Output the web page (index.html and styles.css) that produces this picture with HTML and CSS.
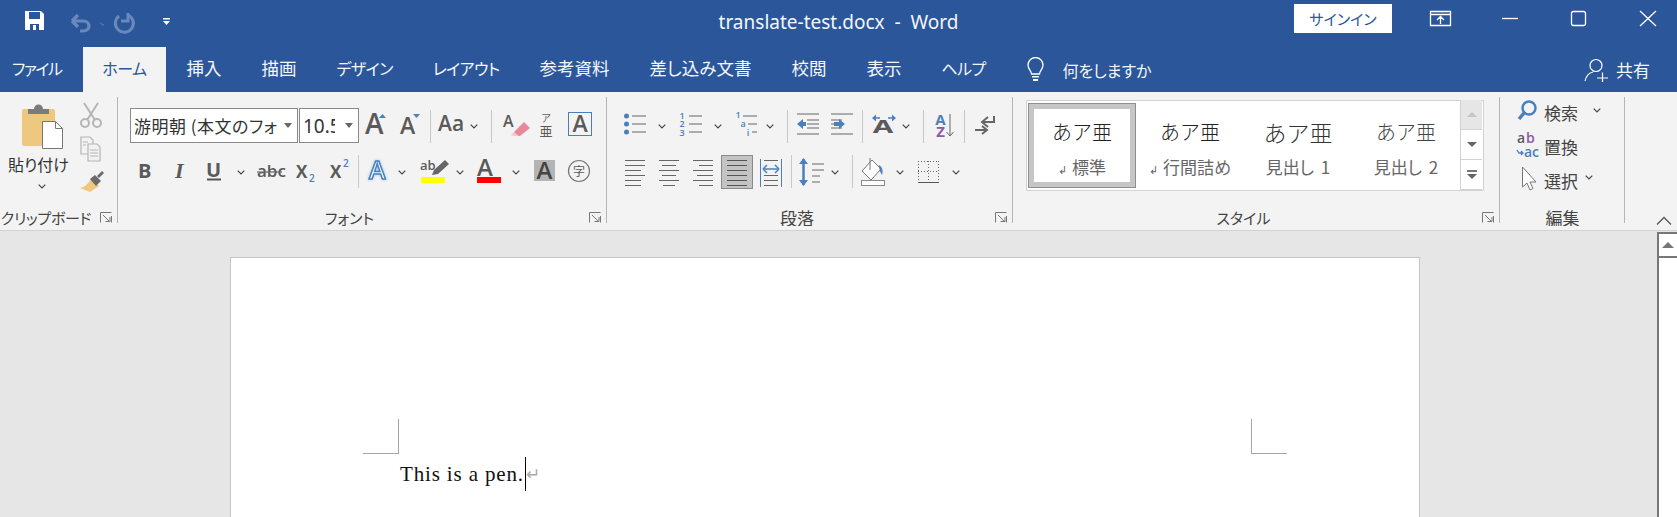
FILE: index.html
```html
<!DOCTYPE html>
<html lang="ja">

<head>
    <meta charset="UTF-8">
    <title>translate-test.docx - Word</title>
    <link rel="stylesheet" href="styles.css">
</head>

<body>
    <svg class="defs" width="0" height="0">
        <symbol id="chev" viewBox="0 0 8 5" width="8" height="5">
            <path d="M.7.7 4 4 7.3.7" fill="none" stroke="#444" stroke-width="1.2" />
        </symbol>
        <symbol id="launch" viewBox="0 0 12 11" width="12" height="11">
            <path d="M.5 10.5V.5h11M3 3l6 6M5.500 9.500H10V5M11.500 4v6.500" fill="none" stroke="#777" />
        </symbol>
    </svg>

    <header class="titlebar">
        <div class="qat">
            <svg width="60" height="47">
                <path d="M25 11h16l3 3v16H25z" fill="#fff" />
                <path d="M29 12h11v7H29z" fill="#2b579a" />
                <path d="M30 24h9v6h-9z" fill="#2b579a" />
                <path d="M33 25h3v5h-3z" fill="#fff" />
            </svg>
            <svg width="44" height="47">
                <path d="M12 21h11c8 0 8 10 0 10h-3M12 21l6-6M12 21l6 6" fill="none" stroke="#6a89bb" stroke-width="3.200" />
                <path d="M40 22.500l3 3 3-3" fill="none" stroke="#6a89bb" />
            </svg>
            <svg width="73" height="47">
                <path d="M27 15a9 9 0 1 1-9 1M27 13v8h-7" fill="none" stroke="#6a89bb" stroke-width="3" transform="translate(-3 0)" />
                <path d="M73 18h-7v1.500h7zM66 21h7l-3.500 4z" fill="#fff" transform="translate(-7 0)" />
            </svg>
        </div>
        <div class="doc-title">translate-test.docx&nbsp; -&nbsp; Word</div>
        <div class="winctrl">
            <button class="signin">サインイン</button>
            <svg width="285" height="47" class="winicons">
                <g fill="none" stroke="#fff" stroke-width="1.300">
                    <path d="M38.500 11.500h20v14h-20zM38.500 14.500h20M48.500 24v-7M45 20l3.500-3.500 3.500 3.500" />
                    <path d="M110 18.500h16" />
                    <rect x="179.500" y="11.500" width="14" height="14" rx="2" />
                    <path d="M248 11l16 15M264 11l-16 15" />
                </g>
            </svg>
        </div>
    </header>

    <nav class="tabs">
        <a class="tab file">ファイル</a>
        <a class="tab active kana">ホーム</a>
        <a class="tab">挿入</a>
        <a class="tab">描画</a>
        <a class="tab kana">デザイン</a>
        <a class="tab kana">レイアウト</a>
        <a class="tab">参考資料</a>
        <a class="tab">差し込み文書</a>
        <a class="tab">校閲</a>
        <a class="tab">表示</a>
        <a class="tab kana">ヘルプ</a>
        <div class="tell-me">
            <svg width="19" height="25">
                <path d="M5.500 17c0-3-3.500-4.500-3.500-9a7.500 7.500 0 0 1 15 0c0 4.500-3.500 6-3.500 9z" fill="none" stroke="#fff" stroke-width="1.300" />
                <path d="M6 19h7v1.500H6zM7 22h5v2H7z" fill="#fff" />
            </svg>
            <span>何をしますか</span>
        </div>
        <div class="share">
            <svg width="24" height="24">
                <circle cx="12" cy="7.500" r="6" fill="none" stroke="#fff" stroke-width="1.200" />
                <path d="M1 23c1-5 4-8 8-9M13 20h11M18.500 14.500V24" fill="none" stroke="#fff" stroke-width="1.200" />
            </svg>
            <span>共有</span>
        </div>
    </nav>

    <section class="ribbon">
        <div class="group clip">
            <div class="clip-body">
                <div class="paste">
                    <svg width="45" height="47">
                        <rect x="3" y="6" width="33" height="37" rx="2" fill="#edc87e" />
                        <path d="M9 11V6h6a4 4 0 0 1 9 0h6v5z" fill="#7b7b7b" />
                        <path d="M23.500 18.500h13l7 7v20h-20z" fill="#fff" stroke="#777" />
                        <path d="M36.500 18.500v7h7" fill="none" stroke="#777" />
                    </svg>
                    <span>貼り付け</span>
                    <svg width="8" height="5" class="paste-chev"><use href="#chev" /></svg>
                </div>
                <div class="clip-tools">
                    <svg width="24" height="26">
                        <g fill="none" stroke="#b5b5b5" stroke-width="2">
                            <path d="M5 1l11 17M19 1L8 18" />
                            <circle cx="6" cy="21" r="4" />
                            <circle cx="18" cy="21" r="4" />
                        </g>
                    </svg>
                    <svg width="24" height="26">
                        <g fill="#f2f2f2" stroke="#b5b5b5" stroke-width="1.200">
                            <path d="M2 1h9l3 3v14H2z" />
                            <path d="M9 8h9l3 3v14H9z" />
                            <path d="M11 14h8M11 17h8M11 20h8M4 6h5M4 9h3" />
                        </g>
                    </svg>
                    <svg width="26" height="24">
                        <path d="M12 9l8 7-9 6-10-4c5-1 8-4 11-9z" fill="#edc87e" />
                        <path d="M11 9l5-4 6 6-5 5z" fill="#6a6a6a" />
                        <path d="M18 6l5-5 2 2-5 5z" fill="#6a6a6a" />
                    </svg>
                </div>
            </div>
            <div class="group-label">クリップボード</div>
            <svg class="launcher"><use href="#launch" /></svg>
        </div>

        <div class="group font">
            <div class="row top">
                <div class="combo name">游明朝 (本文のフォ<b class="caret"></b></div>
                <div class="combo size"><span>10.5</span><b class="caret"></b></div>
                <svg width="37" height="35">
                    <text x="6" y="26" font-size="28" class="gl">A</text>
                    <path d="M20 10l3.500-4 3.500 4z" fill="#4a80bd" />
                </svg>
                <svg width="34" height="35">
                    <text x="4" y="26" font-size="23" class="gl">A</text>
                    <path d="M17 6h7l-3.500 4z" fill="#4a80bd" />
                </svg>
                <i class="sep"></i>
                <svg width="60" height="35">
                    <text x="7" y="23" font-size="21" class="gl">Aa</text>
                    <use href="#chev" x="39" y="16" />
                </svg>
                <i class="sep"></i>
                <svg width="44" height="35">
                    <text x="11" y="19" font-size="16" class="gl">A</text>
                    <path d="M22 24l10-10 6 6-10 8h-4z" fill="#e8889b" />
                    <path d="M19 27l3-3 5 4h-5z" fill="#f3c4ce" />
                </svg>
                <svg width="25" height="35">
                    <text x="10" y="14" font-size="10" text-anchor="middle" class="gl cjk">ア</text>
                    <text x="10" y="28" font-size="13" text-anchor="middle" class="gl cjk">亜</text>
                </svg>
                <svg width="40" height="35">
                    <rect x="7.500" y="4.500" width="23" height="23" fill="none" stroke="#4a7ebb" />
                    <text x="19" y="24" font-size="23" text-anchor="middle" class="gl">A</text>
                </svg>
            </div>
            <div class="row">
                <svg width="35" height="38"><text x="8" y="25" font-size="20" class="gl bold">B</text></svg>
                <svg width="35" height="38"><text x="10" y="25" font-size="22" class="gl slab">I</text></svg>
                <svg width="33" height="38">
                    <text x="6" y="24" font-size="20" class="gl bold">U</text>
                    <path d="M7 26.500h14" stroke="#555" stroke-width="2" />
                </svg>
                <svg width="17" height="38"><use href="#chev" x="4" y="17" /></svg>
                <svg width="36" height="38">
                    <text x="7" y="24" font-size="17" class="gl">abc</text>
                    <path d="M7 19h25" stroke="#666" stroke-width="1.200" />
                </svg>
                <svg width="36" height="38">
                    <text x="10" y="25" font-size="17" class="gl bold">X</text>
                    <text x="23" y="29" font-size="10" class="gl blue">2</text>
                </svg>
                <svg width="36" height="38">
                    <text x="8" y="25" font-size="17" class="gl bold">X</text>
                    <text x="21" y="14" font-size="10" class="gl blue">2</text>
                </svg>
                <i class="sep"></i>
                <svg width="36" height="38">
                    <text x="10" y="26" font-size="25" class="gl glow">A</text>
                </svg>
                <svg width="16" height="38"><use href="#chev" x="3" y="17" /></svg>
                <svg width="41" height="38">
                    <text x="9" y="17" font-size="13" class="gl">ab</text>
                    <path d="M21 22l2-5 11-10 4 4-11 10z" fill="#666" />
                    <rect x="10" y="24" width="24" height="6" fill="#ff0" />
                </svg>
                <svg width="16" height="38"><use href="#chev" x="4" y="17" /></svg>
                <svg width="41" height="38">
                    <text x="9" y="23" font-size="24" class="gl">A</text>
                    <rect x="9" y="24" width="24" height="6" fill="#f00" />
                </svg>
                <svg width="16" height="38"><use href="#chev" x="3" y="17" /></svg>
                <svg width="37" height="38">
                    <rect x="9" y="7" width="21" height="21" fill="#b4b4b4" />
                    <text x="19.500" y="26" font-size="24" text-anchor="middle" class="gl dark">A</text>
                </svg>
                <svg width="38" height="38">
                    <circle cx="17" cy="18" r="10.500" fill="none" stroke="#777" stroke-width="1.200" />
                    <text x="17" y="22.500" font-size="12" text-anchor="middle" class="gl cjk">字</text>
                </svg>
            </div>
            <div class="group-label">フォント</div>
            <svg class="launcher"><use href="#launch" /></svg>
        </div>

        <div class="group para">
            <div class="row top">
                <svg width="36" height="35">
                    <g fill="#4a80bd"><circle cx="8.500" cy="8" r="2.500" /><circle cx="8.500" cy="16" r="2.500" /><circle cx="8.500" cy="24" r="2.500" /></g>
                    <path d="M14 8h14M14 16h14M14 24h14" stroke="#666" />
                </svg>
                <svg width="16" height="35"><use href="#chev" x="4" y="16" /></svg>
                <svg width="36" height="35">
                    <text x="12" y="11" font-size="9" text-anchor="middle" class="gl blue">1</text>
                    <text x="12" y="19" font-size="9" text-anchor="middle" class="gl blue">2</text>
                    <text x="12" y="28" font-size="9" text-anchor="middle" class="gl blue">3</text>
                    <path d="M19 8h13M19 16h13M19 24h13" stroke="#666" />
                </svg>
                <svg width="20" height="35"><use href="#chev" x="8" y="16" /></svg>
                <svg width="36" height="35">
                    <text x="12" y="10" font-size="9" text-anchor="middle" class="gl blue">1</text>
                    <text x="17" y="19" font-size="9" text-anchor="middle" class="gl blue">a</text>
                    <text x="22" y="28" font-size="9" text-anchor="middle" class="gl blue">i</text>
                    <path d="M17 8h14M22 16h9M26 24h5" stroke="#666" />
                </svg>
                <svg width="25" height="35"><use href="#chev" x="4" y="16" /></svg>
                <i class="sep"></i>
                <svg width="37" height="35">
                    <path d="M9 6h22M19 12h12M19 16h12M19 20h12M9 26h22" stroke="#666" />
                    <path d="M9 16l6-5v3h3v4h-3v3z" fill="#4a80bd" />
                </svg>
                <svg width="37" height="35">
                    <path d="M6 6h22M6 12h11M6 16h11M6 20h11M6 26h22" stroke="#666" />
                    <path d="M17 16l-6-5v3H6v4h5v3z" fill="#4a80bd" transform="translate(3 0)" />
                </svg>
                <i class="sep"></i>
                <svg width="37" height="35">
                    <text font-size="17" text-anchor="middle" class="gl bold" transform="translate(20 25) scale(1.750 1)">A</text>
                    <path d="M11 10h6M25 10h6" stroke="#4a80bd" stroke-width="1.500" />
                    <path d="M9 10l4-3.500v7zM33 10l-4-3.500v7z" fill="#4a80bd" />
                </svg>
                <svg width="23" height="35"><use href="#chev" x="2" y="16" /></svg>
                <i class="sep"></i>
                <svg width="40" height="35">
                    <text x="16.500" y="17" font-size="15" text-anchor="middle" class="gl blue bold">A</text>
                    <text x="16.500" y="29" font-size="15" text-anchor="middle" class="gl bold purple">Z</text>
                    <path d="M26 6v22M22.500 24l3.500 4 3.500-4" fill="none" stroke="#666" />
                </svg>
                <i class="sep"></i>
                <svg width="40" height="35">
                    <path d="M29 8v6H17M23 9l-6 5 6 5" fill="none" stroke="#666" stroke-width="2" />
                    <path d="M10 22h12M17 18l5 4-5 4" fill="none" stroke="#666" stroke-width="2" />
                </svg>
            </div>
            <div class="row">
                <svg width="34" height="38">
                    <path d="M7 7.500h20M7 12.500h20M7 17.500h16M7 22.500h20M7 27.500h16M7 32.500h16" stroke="#666" />
                </svg>
                <svg width="34" height="38">
                    <path d="M7 7.500h20M10 12.500h14M7 17.500h20M10 22.500h14M7 27.500h20M11 32.500h12" stroke="#666" />
                </svg>
                <svg width="34" height="38">
                    <path d="M7 7.500h20M13 12.500h14M7 17.500h20M11 22.500h16M7 27.500h20M13 32.500h14" stroke="#666" />
                </svg>
                <svg width="36" height="38">
                    <rect x="1.500" y="2.500" width="31" height="33" fill="#c3c3c3" stroke="#8a8a8a" />
                    <path d="M7 7.500h20M7 12.500h20M7 17.500h20M7 22.500h20M7 27.500h20M7 32.500h20" stroke="#555" />
                </svg>
                <svg width="35" height="38">
                    <path d="M4.500 6v28M25.500 6v28" stroke="#4a80bd" />
                    <path d="M8 16h14" stroke="#4a80bd" stroke-width="1.500" />
                    <path d="M7 14l4-4M7 14l4 4M23 14l-4-4M23 14l-4 4" stroke="#4a80bd" stroke-width="1.500" transform="translate(0 2)" />
                    <path d="M8 7.500h14M8 22.500h14M8 27.500h14M8 32.500h14" stroke="#666" />
                </svg>
                <i class="sep"></i>
                <svg width="37" height="38">
                    <path d="M11.500 6v26" stroke="#4a80bd" stroke-width="2.500" />
                    <path d="M7 11l4.500-6 4.500 6zM7 27l4.500 6 4.500-6z" fill="#4a80bd" />
                    <path d="M20 11h12M20 17h12M20 23h8M20 29h8" stroke="#666" />
                </svg>
                <svg width="23" height="38"><use href="#chev" x="2" y="17" /></svg>
                <i class="sep"></i>
                <svg width="39" height="38">
                    <path d="M19 7l-10 11 9 9 10-11z" fill="#fff" stroke="#777" />
                    <path d="M17 5v12" stroke="#777" />
                    <path d="M26 12c4 2 4 7 3 10-2-3-3-6-3-10z" fill="#4a80bd" />
                    <rect x="8.500" y="27.500" width="23" height="5" fill="#fff" stroke="#888" />
                </svg>
                <svg width="18" height="38"><use href="#chev" x="4" y="17" /></svg>
                <svg width="38" height="38">
                    <path d="M8.500 8v21M18.500 8v21M28.500 8v21M8 8.500h21M8 18.500h21" stroke="#666" stroke-dasharray="1 2" fill="none" />
                    <path d="M8 29.500h21" stroke="#555" />
                </svg>
                <svg width="16" height="38"><use href="#chev" x="4" y="17" /></svg>
            </div>
            <div class="group-label">段落</div>
            <svg class="launcher"><use href="#launch" /></svg>
        </div>

        <div class="group styles">
            <div class="gallery">
                <div class="style-item selected">
                    <div class="preview">あア亜</div>
                    <div class="style-name"><small>↲</small>標準</div>
                </div>
                <div class="style-item">
                    <div class="preview">あア亜</div>
                    <div class="style-name"><small>↲</small>行間詰め</div>
                </div>
                <div class="style-item">
                    <div class="preview h1">あア亜</div>
                    <div class="style-name">見出し 1</div>
                </div>
                <div class="style-item">
                    <div class="preview h2">あア亜</div>
                    <div class="style-name">見出し 2</div>
                </div>
                <div class="gallery-scroll">
                    <div class="scroll-cell off"><b class="tri up"></b></div>
                    <div class="scroll-cell"><b class="tri"></b></div>
                    <div class="scroll-cell more"><b class="tri"></b></div>
                </div>
            </div>
            <div class="group-label">スタイル</div>
            <svg class="launcher"><use href="#launch" /></svg>
        </div>

        <div class="group edit">
            <div class="edit-row">
                <svg width="44" height="34">
                    <circle cx="29" cy="13" r="6.500" fill="none" stroke="#4a80bd" stroke-width="2.500" />
                    <path d="M24 18l-5 6" stroke="#4a80bd" stroke-width="3.500" />
                </svg>
                <span>検索</span>
                <svg width="24" height="34"><use href="#chev" x="15" y="13" /></svg>
            </div>
            <div class="edit-row">
                <svg width="44" height="34">
                    <text x="17" y="14" font-size="14" class="gl">a</text>
                    <text x="26" y="14" font-size="14" class="gl purple">b</text>
                    <text x="24" y="28" font-size="14" class="gl blue">ac</text>
                    <path d="M17 21l2 3h4M21 22l2 2-2 2" fill="none" stroke="#4a80bd" stroke-width="1.300" />
                </svg>
                <span>置換</span>
            </div>
            <div class="edit-row">
                <svg width="44" height="34">
                    <path d="M22.500 4v20l4.500-4 3 7 3-1.500-3-6.500h6z" fill="#fff" stroke="#777" />
                </svg>
                <span>選択</span>
                <svg width="16" height="34"><use href="#chev" x="7" y="12" /></svg>
            </div>
            <div class="group-label">編集</div>
        </div>

        <svg class="collapse" width="16" height="9">
            <path d="M1 8.500l7-7 7 7" fill="none" stroke="#555" stroke-width="1.300" />
        </svg>
    </section>

    <main class="workspace">
        <div class="page-area">
            <div class="page">
                <div class="crops">
                    <div class="crop left"></div>
                    <div class="crop right"></div>
                </div>
                <p class="doc-text">This is a pen.<i class="cursor"></i><span class="mark">↵</span></p>
            </div>
        </div>
        <div class="scrollbar">
            <div class="scroll-btn"><b class="tri up"></b></div>
        </div>
    </main>
</body>

</html>
```

FILE: styles.css
```css
* {
    box-sizing: border-box;
}

body {
    margin: 0;
    height: 517px;
    overflow: hidden;
    background: #e6e6e6;
    font-family: "Noto Sans CJK JP", "Noto Sans", sans-serif;
    font-feature-settings: "palt";
    color: #444;
}

svg {
    display: block;
    flex: none;
}

.defs {
    position: absolute;
}

/* title bar */
.titlebar {
    display: grid;
    grid-template-columns: 1fr auto 1fr;
    height: 47px;
    background: #2b579a;
    color: #fff;
}

.qat {
    display: flex;
}

.doc-title {
    font-family: "Noto Sans", sans-serif;
    font-size: 19px;
    line-height: 44px;
    color: #f3f6fa;
}

.winctrl {
    display: flex;
    justify-content: flex-end;
}

.signin {
    width: 98px;
    height: 29px;
    margin-top: 4px;
    padding: 0;
    border: none;
    background: #fff;
    color: #2b579a;
    font: 15px "Noto Sans CJK JP", sans-serif;
    font-feature-settings: "palt";
}

/* tabs */
.tabs {
    display: flex;
    height: 45px;
    background: #2b579a;
    color: #f3f6fa;
    font-size: 17.500px;
    line-height: 42px;
}

.tab {
    padding: 0 20px;
}

.tab.kana {
    font-size: 16px;
    letter-spacing: -.6px;
}

.tab.file {
    padding: 0 22px 0 12px;
    font-size: 16px;
    letter-spacing: -1.500px;
}

.tab.active {
    background: #f3f3f3;
    color: #2b579a;
    padding: 0 20px 0 19px;
}

.tell-me {
    display: flex;
    align-items: center;
    margin-left: 20px;
    gap: 18px;
    font-size: 16px;
}

.share {
    display: flex;
    align-items: center;
    margin-left: auto;
    margin-right: 27px;
    gap: 8px;
    font-size: 17px;
}

/* ribbon */
.ribbon {
    display: flex;
    height: 139px;
    padding-top: 5px;
    background: #f3f3f3;
    border-bottom: 1px solid #d2d2d2;
    overflow: hidden;
}

.group {
    position: relative;
    height: 129px;
    flex: none;
}

.group::after {
    content: "";
    position: absolute;
    top: 0;
    right: 0;
    bottom: 3px;
    width: 1px;
    background: #b6b6b6;
}

.group-label {
    position: absolute;
    left: 0;
    right: 0;
    bottom: 0;
    height: 17px;
    display: flex;
    justify-content: center;
    padding-right: 26px;
    font-size: 15px;
    line-height: 17px;
    white-space: nowrap;
    overflow: hidden;
}

.clip .group-label {
    letter-spacing: -.3px;
}

.para .group-label {
    font-size: 17px;
}

.edit .group-label {
    padding-right: 0;
    font-size: 17px;
}

.launcher {
    position: absolute;
    right: 6px;
    bottom: 3px;
    width: 12px;
    height: 11px;
}

.clip {
    width: 118px;
}

.font {
    width: 489px;
    padding: 11px 0 0 12px;
}

.para {
    width: 406px;
    padding: 11px 0 0 11px;
}

.styles {
    width: 487px;
    padding: 3px 0 0 13px;
}

.edit {
    width: 125px;
}

.row {
    display: flex;
    height: 38px;
}

.row.top {
    height: 35px;
    margin-bottom: 10px;
}

.sep {
    flex: none;
    width: 1px;
    height: 33px;
    margin-top: 2px;
    background: #c8c8c8;
}

.gl {
    font-family: "Open Sans", "Noto Sans", sans-serif;
    font-weight: 600;
    fill: #5a5a5a;
}

.gl.cjk {
    font-family: "Noto Sans CJK JP", sans-serif;
    font-weight: 400;
}

.gl.bold {
    font-weight: 700;
}

.gl.slab {
    font-family: "Liberation Serif", serif;
    font-style: italic;
    font-weight: 700;
}

.gl.blue {
    fill: #4a80bd;
}

.gl.purple {
    fill: #8c5aa8;
}

.gl.dark {
    fill: #444;
}

.gl.glow {
    fill: #f3f7fc;
    stroke: #4a80bd;
    stroke-width: 1.500;
    filter: drop-shadow(0 0 1.500px #a9c6e6);
}

/* clipboard */
.clip-body {
    display: flex;
    padding-top: 6px;
}

.paste {
    display: flex;
    flex-direction: column;
    width: 79px;
    padding-left: 8px;
    font-size: 16px;
    color: #333;
}

.paste svg {
    margin-left: 11px;
}

.paste span {
    margin-top: 2px;
    line-height: 24px;
}

.paste .paste-chev {
    margin: 8px 0 0 30px;
}

.clip-tools {
    display: flex;
    flex-direction: column;
    gap: 8px;
    margin-top: -1px;
}

/* font group */
.combo {
    position: relative;
    display: flex;
    align-items: center;
    height: 35px;
    flex: none;
    border: 1px solid #8a8a8a;
    background: #fff;
    color: #333;
    overflow: hidden;
    white-space: nowrap;
}

.combo.name {
    width: 168px;
    margin-right: 1px;
    padding-left: 3px;
    font-size: 17px;
    letter-spacing: .5px;
}

.combo.size {
    width: 60px;
    padding-left: 3px;
    font-family: "Noto Sans", sans-serif;
    font-size: 19px;
    font-feature-settings: normal;
}

.combo.size span {
    width: 32px;
    overflow: hidden;
}

.caret {
    position: absolute;
    right: 5px;
    top: 14px;
    border: 4px solid transparent;
    border-top: 5px solid #666;
    border-bottom: 0;
}

/* styles gallery */
.gallery {
    display: flex;
    width: 458px;
    height: 91px;
    padding: 2px 0 0 1px;
    border: 1px solid #d2d2d2;
    background: #fff;
}

.style-item {
    display: flex;
    flex-direction: column;
    align-items: center;
    width: 108px;
    height: 85px;
    padding-top: 14px;
}

.style-item.selected {
    border: 1px solid #8f8f8f;
    outline: 5px solid #c6c6c6;
    outline-offset: -6px;
    padding-top: 13px;
}

.preview {
    height: 30px;
    font-size: 20px;
    line-height: 30px;
    font-weight: 300;
    color: #222;
    font-feature-settings: normal;
}

.preview.h1 {
    font-size: 23px;
    color: #333;
}

.preview.h2 {
    color: #444;
}

.style-name {
    margin-top: 8px;
    font-size: 17px;
    line-height: 23px;
    word-spacing: 3px;
    color: #666;
}

.style-name small {
    margin-right: 5px;
    font-size: 11px;
}

.gallery-scroll {
    display: flex;
    flex-direction: column;
    width: 22px;
    margin: -3px 0 0 0;
    border-left: 1px solid #d2d2d2;
}

.scroll-cell {
    display: flex;
    flex-direction: column;
    align-items: center;
    justify-content: center;
    flex: 1;
    border-bottom: 1px solid #d2d2d2;
}

.scroll-cell.off {
    background: #e6e6e6;
}

.scroll-cell.off .tri {
    border-bottom-color: #c4c4c4;
}

.scroll-cell.more::before {
    content: "";
    width: 10px;
    height: 2px;
    margin-bottom: 2px;
    background: #777;
}

.tri {
    display: block;
    border: 5px solid transparent;
    border-top: 5px solid #666;
    border-bottom: 0;
}

.tri.up {
    border-top: 0;
    border-bottom: 5px solid #666;
}

/* editing */
.edit-row {
    display: flex;
    align-items: center;
    height: 34px;
    font-size: 17px;
    color: #444;
}

.edit-row:first-child {
    margin-top: -2px;
}

.collapse {
    align-self: flex-end;
    margin: 0 0 5px 31px;
}

/* document */
.workspace {
    display: flex;
    height: 286px;
}

.page-area {
    flex: 1;
    padding: 26px 237px 0 230px;
}

.page {
    height: 260px;
    border: 1px solid #c6c6c6;
    border-bottom: 0;
    background: #fff;
    padding: 161px 132px 0 132px;
}

.crops {
    display: flex;
    justify-content: space-between;
}

.crop {
    width: 36px;
    height: 35px;
    border-bottom: 1px solid #a6a6a6;
}

.crop.left {
    border-right: 1px solid #a6a6a6;
}

.crop.right {
    border-left: 1px solid #a6a6a6;
}

.doc-text {
    display: flex;
    align-items: center;
    height: 34px;
    margin: 3px 0 0 37px;
    font-family: "Liberation Serif", serif;
    font-feature-settings: normal;
    font-size: 21px;
    letter-spacing: .85px;
    color: #111;
}

.cursor {
    width: 1px;
    height: 34px;
    margin: 0 0 0 1px;
    background: #000;
}

.mark {
    font-family: "DejaVu Sans", sans-serif;
    font-size: 17px;
    color: #aaa;
}

.scrollbar {
    width: 20px;
    margin-top: 1px;
    background: #fff;
    border-left: 2px solid #777;
    border-top: 2px solid #777;
}

.scroll-btn {
    display: flex;
    align-items: center;
    justify-content: center;
    height: 24px;
    border-bottom: 2px solid #777;
    background: #fff;
}

.scroll-btn .tri {
    border-width: 0 6px 6px;
    border-bottom-color: #777;
}
```
